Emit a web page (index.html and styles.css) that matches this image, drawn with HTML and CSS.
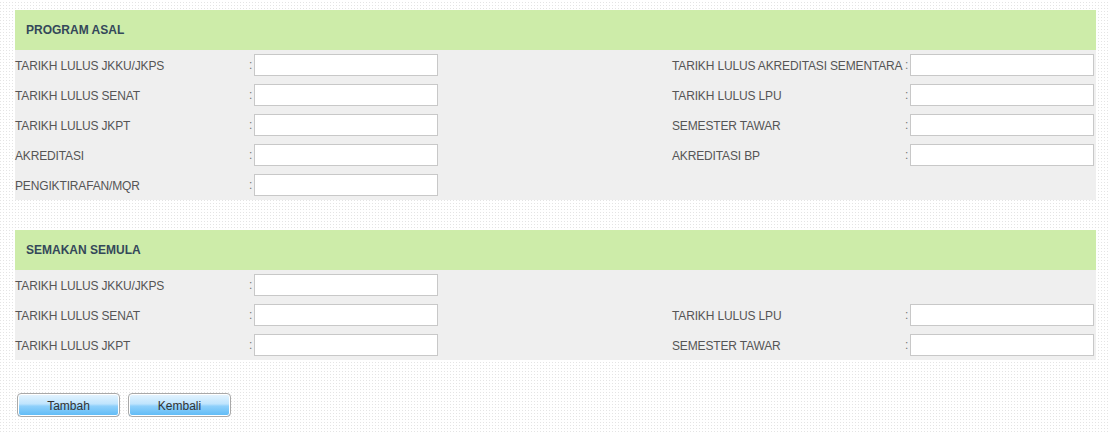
FILE: index.html
```html
<!DOCTYPE html>
<html lang="en">
<head>
    <meta charset="UTF-8">
    <title>Program Asal</title>
    <link rel="stylesheet" href="styles.css">
</head>
<body>
    <div class="page">
        <div class="section">
            <div class="section-head">PROGRAM ASAL</div>
            <div class="form-grid">
                <label>TARIKH LULUS JKKU/JKPS</label><span class="colon">:</span><input type="text">
                <span></span>
                <label>TARIKH LULUS AKREDITASI SEMENTARA</label><span class="colon">:</span><input type="text">

                <label>TARIKH LULUS SENAT</label><span class="colon">:</span><input type="text">
                <span></span>
                <label>TARIKH LULUS LPU</label><span class="colon">:</span><input type="text">

                <label>TARIKH LULUS JKPT</label><span class="colon">:</span><input type="text">
                <span></span>
                <label>SEMESTER TAWAR</label><span class="colon">:</span><input type="text">

                <label>AKREDITASI</label><span class="colon">:</span><input type="text">
                <span></span>
                <label>AKREDITASI BP</label><span class="colon">:</span><input type="text">

                <label>PENGIKTIRAFAN/MQR</label><span class="colon">:</span><input type="text">
                <span></span>
                <span></span><span></span><span></span>
            </div>
        </div>

        <div class="section">
            <div class="section-head">SEMAKAN SEMULA</div>
            <div class="form-grid">
                <label>TARIKH LULUS JKKU/JKPS</label><span class="colon">:</span><input type="text">
                <span></span>
                <span></span><span></span><span></span>

                <label>TARIKH LULUS SENAT</label><span class="colon">:</span><input type="text">
                <span></span>
                <label>TARIKH LULUS LPU</label><span class="colon">:</span><input type="text">

                <label>TARIKH LULUS JKPT</label><span class="colon">:</span><input type="text">
                <span></span>
                <label>SEMESTER TAWAR</label><span class="colon">:</span><input type="text">
            </div>
        </div>

        <div class="actions">
            <button class="btn">Tambah</button>
            <button class="btn">Kembali</button>
        </div>
    </div>
</body>
</html>
```

FILE: styles.css
```css
body {
    margin: 0;
    font-family: "Liberation Sans", Arial, sans-serif;
    font-size: 12px;
    color: #555;
    background-color: #fff;
    background-image:
        linear-gradient(#fff 2px, transparent 2px),
        linear-gradient(90deg, #e4e4e4 1px, transparent 1px);
    background-size: 3px 3px;
    height: 434px;
}

.page {
    padding: 10px 12px 0 15px;
}

.section {
    margin-bottom: 30px;
}

.section-head {
    background-color: #cdeca9;
    height: 40px;
    line-height: 41px;
    padding-left: 11px;
    font-weight: bold;
    color: #34485a;
}

.form-grid {
    background-color: #efefef;
    display: grid;
    grid-template-columns: 232px 7px 184px 1fr 231px 7px 184px;
    grid-auto-rows: 30px;
    align-items: center;
    padding-right: 2px;
}

.form-grid label {
    white-space: nowrap;
    color: #555;
    letter-spacing: -0.15px;
    padding-top: 1px;
}

.colon {
    color: #777;
    padding-left: 2px;
}

.form-grid input {
    box-sizing: border-box;
    width: 184px;
    height: 22px;
    border: 1px solid #c8c8c8;
    background: #fff;
    margin: 0;
    padding: 2px 4px;
}

.actions {
    display: flex;
    gap: 8px;
    padding-left: 2px;
    margin-top: 33px;
}

.btn {
    width: 103px;
    height: 24px;
    border: 1px solid #a9a9a9;
    border-radius: 4px;
    box-shadow: inset 0 0 0 1px #fff;
    background: linear-gradient(#e6f5ff 0%, #bfe4fd 45%, #8fd0fb 55%, #5cbaf6 100%);
    font-family: "Liberation Sans", Arial, sans-serif;
    font-size: 12px;
    color: #333;
    padding: 2px 0 0;
    cursor: pointer;
}
```
